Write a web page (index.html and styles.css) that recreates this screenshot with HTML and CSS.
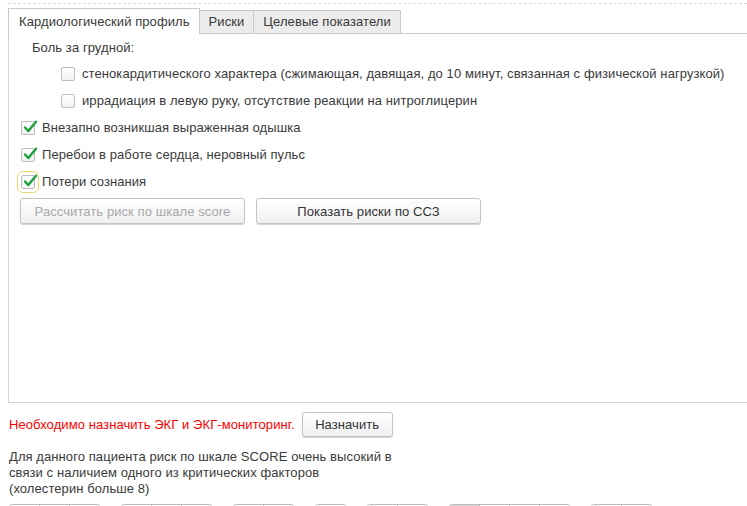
FILE: index.html
```html
<!DOCTYPE html>
<html lang="ru">
<head>
    <meta charset="UTF-8">
    <title>Кардиологический профиль</title>
    <link rel="stylesheet" href="styles.css">
</head>
<body>
    <div class="page">
        <div class="dash"></div>

        <div class="tabs">
            <div class="tab tab-active">Кардиологический профиль</div>
            <div class="tab">Риски</div>
            <div class="tab">Целевые показатели</div>
        </div>

        <div class="panel">
            <div class="group-title">Боль за грудной:</div>
            <label class="check-row sub">
                <span class="box"></span>
                стенокардитического характера (сжимающая, давящая, до 10 минут, связанная с физической нагрузкой)
            </label>
            <label class="check-row sub">
                <span class="box"></span>
                иррадиация в левую руку, отсутствие реакции на нитроглицерин
            </label>
            <label class="check-row">
                <span class="box checked"><svg class="tick" viewBox="0 0 16 14"><path d="M3 7.5 L6.3 11 L14 1.8"/></svg></span>
                Внезапно возникшая выраженная одышка
            </label>
            <label class="check-row">
                <span class="box checked"><svg class="tick" viewBox="0 0 16 14"><path d="M3 7.5 L6.3 11 L14 1.8"/></svg></span>
                Перебои в работе сердца, неровный пульс
            </label>
            <label class="check-row">
                <span class="box checked focused"><svg class="tick" viewBox="0 0 16 14"><path d="M3 7.5 L6.3 11 L14 1.8"/></svg></span>
                Потери сознания
            </label>

            <div class="panel-buttons">
                <button class="btn btn-wide btn-disabled">Рассчитать риск по шкале score</button>
                <button class="btn btn-wide">Показать риски по ССЗ</button>
            </div>
        </div>

        <div class="notice-row">
            <span class="notice">Необходимо назначить ЭКГ и ЭКГ-мониторинг.</span>
            <button class="btn btn-small">Назначить</button>
        </div>

        <p class="info">
            Для данного пациента риск по шкале SCORE очень высокий в<br>
            связи с наличием одного из критических факторов<br>
            (холестерин больше 8)
        </p>

        <div class="toolbar">
            <div class="seg-group"><span class="seg"></span><span class="seg"></span><span class="seg"></span></div>
            <div class="seg-group"><span class="seg"></span><span class="seg"></span><span class="seg"></span></div>
            <div class="seg-group"><span class="seg"></span><span class="seg"></span></div>
            <div class="seg-group"><span class="seg"></span></div>
            <div class="seg-group"><span class="seg"></span><span class="seg"></span></div>
            <div class="seg-group"><span class="seg seg-pressed"></span><span class="seg"></span><span class="seg"></span><span class="seg"></span></div>
            <div class="seg-group"><span class="seg"></span><span class="seg"></span></div>
        </div>
    </div>
</body>
</html>
```

FILE: styles.css
```css
body {
    margin: 0;
    width: 747px;
    height: 506px;
    overflow: hidden;
    background-color: #fff;
    font-family: "Liberation Sans", Arial, sans-serif;
    font-size: 13px;
    letter-spacing: 0.08px;
    color: #3a3a3a;
}

.page {
    padding: 3px 0 0 8px;
}

.dash {
    border-top: 1px dashed #dcdcdc;
}

/* tabs */
.tabs {
    display: flex;
    align-items: flex-end;
    height: 25px;
    margin-top: 4px;
    border-bottom: 1px solid #c9c9c9;
}

.tab {
    height: 22px;
    line-height: 22px;
    padding: 0 9px;
    background-color: #ececec;
    border: 1px solid #c9c9c9;
    border-left: none;
    border-bottom: none;
    white-space: nowrap;
}

.tab-active {
    height: 25px;
    line-height: 25px;
    padding: 0 9px 0 10px;
    margin-bottom: -1px;
    background-color: #fff;
    border-left: 1px solid #c9c9c9;
}

/* panel */
.panel {
    height: 369px;
    box-sizing: border-box;
    padding: 2px 0 0 12px;
    border-left: 1px solid #d3d3d3;
    border-bottom: 1px solid #d3d3d3;
}

.group-title {
    height: 24px;
    line-height: 24px;
    margin-left: 11px;
}

.check-row {
    display: flex;
    align-items: center;
    gap: 7px;
    height: 27px;
    white-space: nowrap;
}

.check-row.sub {
    margin-left: 40px;
}

.box {
    position: relative;
    width: 12px;
    height: 12px;
    flex: none;
    border: 1px solid #bdbdbd;
    border-radius: 2px;
    background: linear-gradient(#fff, #f2f2f2);
}

.box.focused {
    outline: 1px solid #f1d470;
    outline-offset: 3px;
}

.tick {
    position: absolute;
    left: 0;
    top: -2px;
    width: 16px;
    height: 14px;
    overflow: visible;
}

.tick path {
    fill: none;
    stroke: #1e9e3e;
    stroke-width: 2.5;
    stroke-linecap: round;
    stroke-linejoin: round;
}

.panel-buttons {
    display: flex;
    gap: 11px;
    margin-top: 3px;
    margin-left: -1px;
}

/* buttons */
.btn {
    height: 26px;
    padding: 0;
    font-family: inherit;
    font-size: 13px;
    letter-spacing: inherit;
    color: #333;
    border: 1px solid #c3c3c3;
    border-radius: 3px;
    background: linear-gradient(#fff, #f0f0f0);
    box-shadow: 0 1px 1px rgba(0, 0, 0, 0.18);
    cursor: pointer;
}

.btn-wide {
    width: 225px;
}

.btn-disabled {
    color: #a8a8a8;
    cursor: default;
}

.btn-small {
    width: 91px;
    height: 25px;
}

.notice-row {
    display: flex;
    align-items: center;
    gap: 7px;
    margin-top: 9px;
    padding-left: 1px;
}

.notice {
    color: #f00;
}

.info {
    margin: 12px 0 0;
    padding-left: 1px;
    line-height: 16px;
}

/* bottom toolbar, mostly cut off */
.toolbar {
    display: flex;
    gap: 21px;
    margin-top: 7px;
    padding-left: 1px;
}

.seg-group {
    display: flex;
    border: 1px solid #bdbdbd;
    border-radius: 3px 3px 0 0;
    overflow: hidden;
}

.seg {
    width: 29px;
    height: 22px;
    background: linear-gradient(#fff, #f0f0f0);
}

.seg + .seg {
    border-left: 1px solid #bdbdbd;
}

.seg-pressed {
    background: #d6d6d6;
}
```
